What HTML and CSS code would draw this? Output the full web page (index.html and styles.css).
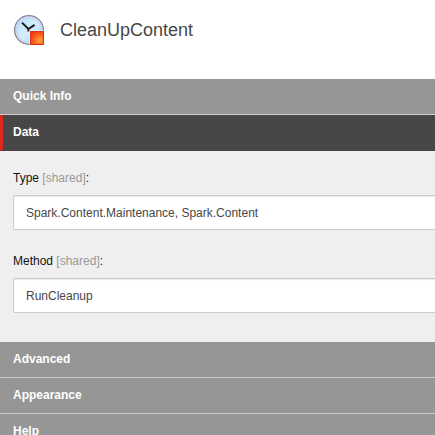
FILE: index.html
```
<!DOCTYPE html>
<html lang="en">
<head>
    <meta charset="utf-8">
    <title>CleanUpContent</title>
    <meta name="viewport" content="width=device-width, initial-scale=1">
    <link rel="stylesheet" href="styles.css">
</head>
<body>
    <header class="item-header">
        <svg class="item-icon" width="32" height="32" viewBox="0 0 32 32" aria-hidden="true">
            <defs>
                <linearGradient id="rim" x1="0" y1="0" x2="0" y2="1">
                    <stop offset="0" stop-color="#8583a8"/>
                    <stop offset="1" stop-color="#77777f"/>
                </linearGradient>
                <linearGradient id="face" x1="0" y1="0" x2="1" y2="1">
                    <stop offset="0" stop-color="#b4dcf9"/>
                    <stop offset="0.5" stop-color="#d3effd"/>
                    <stop offset="1" stop-color="#a9d4f4"/>
                </linearGradient>
                <radialGradient id="stop" cx="0.7" cy="0.7" r="0.8">
                    <stop offset="0" stop-color="#ffa53a"/>
                    <stop offset="0.5" stop-color="#fd6a20"/>
                    <stop offset="1" stop-color="#f03512"/>
                </radialGradient>
            </defs>
            <circle cx="15" cy="16" r="15" fill="url(#rim)"/>
            <circle cx="15" cy="16" r="13.8" fill="#dcdff0"/>
            <circle cx="15" cy="16" r="12.4" fill="url(#face)" stroke="#a9c8e6" stroke-width="0.6"/>
            <path d="M8 8.6L14.4 15L20.6 10.8M14.4 14.6V17.6" fill="none" stroke="#1c1c20" stroke-width="2"/>
            <rect x="15.5" y="16.5" width="15" height="15" fill="#fff"/>
            <rect x="16.5" y="17.5" width="13" height="13" fill="url(#stop)" stroke="#d8321c"/>
        </svg>
        <h1 class="item-title">CleanUpContent</h1>
    </header>

    <main class="sections">
        <button type="button" class="section-bar">Quick Info</button>
        <button type="button" class="section-bar active" aria-expanded="true">Data</button>
        <div class="section-body">
            <div class="field">
                <label for="typeField">Type <span class="shared">[shared]</span>:</label>
                <input type="text" id="typeField" value="Spark.Content.Maintenance, Spark.Content">
            </div>
            <div class="field">
                <label for="methodField">Method <span class="shared">[shared]</span>:</label>
                <input type="text" id="methodField" value="RunCleanup">
            </div>
        </div>
        <button type="button" class="section-bar">Advanced</button>
        <button type="button" class="section-bar">Appearance</button>
        <button type="button" class="section-bar">Help</button>
    </main>
</body>
</html>
```
FILE: styles.css
```
html {
    overflow: hidden; /* the editor pane shows no scrollbars */
}
body {
    margin: 0;
    font-family: "Liberation Sans", Arial, sans-serif;
    font-size: 12px;
    color: #131313;
    background-color: #fff;
}
.item-header {
    display: flex;
    align-items: center;
    gap: 14px;
    padding: 14px 14px 33px;
}
.item-icon {
    flex: none;
}
.item-title {
    margin: 0;
    font-size: 18px;
    line-height: 32px;
    font-weight: normal;
    color: #474747;
}
.section-bar {
    display: block;
    box-sizing: border-box;
    width: 100%;
    padding: 9px 13px 10px;
    border: none;
    border-bottom: 1px solid #ccc;
    background-color: #969696;
    font-family: inherit;
    font-size: 12px;
    line-height: 16px;
    font-weight: bold;
    text-align: left;
    color: #fff;
    cursor: pointer;
}
.section-bar.active {
    padding-left: 10px;
    border-left: 3px solid #dc291e;
    border-bottom-color: #474747;
    background-color: #474747;
}
.section-body {
    display: grid;
    gap: 23px;
    padding: 19px 0 29px 13px;
    background-color: #efefef;
}
.field label {
    display: block;
    margin-bottom: 9px;
    line-height: 16px;
}
.shared {
    color: #999;
}
.field input {
    display: block;
    box-sizing: border-box;
    width: 100%;
    height: 35px;
    padding: 8px 12px;
    border: 1px solid #ccc;
    border-right: none; /* field runs to the pane edge */
    border-radius: 2px 0 0 2px;
    box-shadow: inset 0 1px 1px rgba(0, 0, 0, 0.08);
    background-color: #fff;
    font-family: inherit;
    font-size: 12px;
    color: #474747;
}
```
